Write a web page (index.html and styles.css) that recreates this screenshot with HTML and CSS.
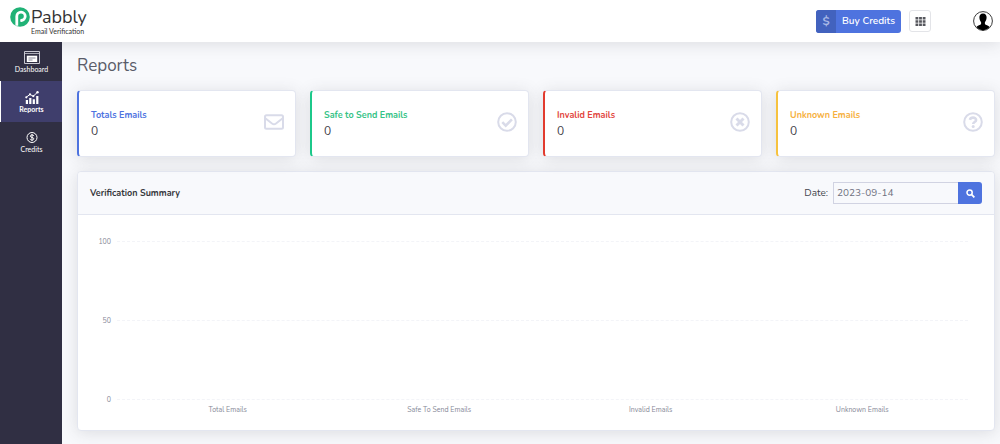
FILE: index.html
```html
<!DOCTYPE html>
<html lang="en">
<head>
<meta charset="utf-8">
<title>Reports - Pabbly Email Verification</title>
<link rel="stylesheet" href="styles.css">
</head>
<body>
<header class="topbar">
  <a class="brand" href="#">
    <svg class="brand-mark" viewBox="0 0 20 20" aria-hidden="true">
      <circle cx="10" cy="10" r="9.8" fill="#20b276"/>
      <path d="M6.800 18.800V9.200a4.200 4.200 0 1 1 4.200 4.300" fill="none" stroke="#fff" stroke-width="2.800"/>
      <path d="M11 12.200v2.500" stroke="#fff" stroke-width="1.500"/>
    </svg>
    <span class="brand-text">
      <span class="brand-name">Pabbly</span>
      <span class="brand-sub">Email Verification</span>
    </span>
  </a>
  <div class="actions">
    <button class="buy" type="button"><span class="buy-icon">$</span><span class="buy-label">Buy Credits</span></button>
    <button class="apps" type="button" aria-label="Apps">
      <svg viewBox="0 0 11 9" width="11" height="9" fill="#55565c"><path d="M.5 0h2.800v2.400H.5zM4.100 0h2.800v2.400H4.100zM7.700 0h2.800v2.400H7.700zM.5 3.300h2.800v2.400H.5zM4.100 3.300h2.800v2.400H4.100zM7.700 3.300h2.800v2.400H7.700zM.5 6.600h2.800V9H.5zM4.100 6.600h2.800V9H4.100zM7.700 6.600h2.800V9H7.700z"/></svg>
    </button>
    <button class="avatar" type="button" aria-label="Account">
      <svg viewBox="0 0 20 20" width="20" height="20">
        <circle cx="10" cy="10" r="9.4" fill="#fff" stroke="#222" stroke-width=".9"/>
        <path d="M10 2.600c2.500 0 3.700 1.700 3.600 4-.1 2-.8 3.700-1.700 4.700v1.600c.5 1 3.600 1.300 4.700 3A9.400 9.400 0 0 1 10 19.400a9.400 9.400 0 0 1-6.600-3.500c1.100-1.700 4.200-2 4.700-3v-1.600C7.200 10.300 6.500 8.600 6.400 6.600c-.1-2.300 1.100-4 3.600-4z" fill="#000"/>
      </svg>
    </button>
  </div>
</header>
<div class="shell">
  <nav class="sidebar">
    <a class="nav-item" href="#">
      <svg viewBox="0 0 16 13" width="16" height="13" fill="none" stroke="#c8c8d2"><path d="M.5.5h15v12H.5z"/><path d="M1 2.500h14" stroke-width=".8"/><path d="M2.800 4.700h10.400v6.300H2.800z" fill="#fff" stroke="none"/><path d="M4.500 7h7M4.500 9h4" stroke="#55546a" stroke-width=".7"/></svg>
      <span>Dashboard</span>
    </a>
    <a class="nav-item active" href="#" aria-current="page">
      <svg viewBox="0 0 14 13" width="14" height="13" fill="#fff"><path d="M.8 9h2.200v4H.8zM4.200 7h2.200v6H4.200zM7.700 8.200h2.200V13H7.700zM11.200 5h2.200v8h-2.200z"/><path d="M1 6.500 5 3.300l3.200 2L12.500 1.200" fill="none" stroke="#fff" stroke-width="1"/><circle cx="1.300" cy="6.300" r="1.100"/><circle cx="5" cy="3.400" r="1.100"/><circle cx="8.300" cy="5.100" r="1.100"/><circle cx="12.500" cy="1.300" r="1.200"/></svg>
      <span>Reports</span>
    </a>
    <a class="nav-item" href="#">
      <svg viewBox="0 0 12 13" width="12" height="13" fill="none" stroke="#fff"><circle cx="6" cy="6.500" r="5"/><path d="M7.800 5c-.2-.8-.9-1.100-1.800-1.100S4.300 4.300 4.300 5.200C4.300 6.900 7.800 6 7.800 7.800c0 .9-.9 1.300-1.800 1.300S4.300 8.700 4.200 7.900M6 3v7"/></svg>
      <span>Credits</span>
    </a>
  </nav>
  <main class="content">
    <h1 class="title">Reports</h1>
    <section class="cards">
      <article class="card blue">
        <div><h2 class="card-label">Totals Emails</h2><p class="card-value">0</p></div>
        <svg class="card-icon" viewBox="0 0 20 20"><rect x="1" y="3.200" width="18" height="13.600" rx="1.500"/><path d="M1.300 6.200 8 11.500q2 1.500 4 0l6.700-5.300"/></svg>
      </article>
      <article class="card green">
        <div><h2 class="card-label">Safe to Send Emails</h2><p class="card-value">0</p></div>
        <svg class="card-icon" viewBox="0 0 20 20"><circle cx="10" cy="10" r="8.800"/><path d="m5.300 10.200 3.400 3.400 6.200-6.200" stroke-width="2.600"/></svg>
      </article>
      <article class="card red">
        <div><h2 class="card-label">Invalid Emails</h2><p class="card-value">0</p></div>
        <svg class="card-icon" viewBox="0 0 20 20"><circle cx="10" cy="10" r="8.800"/><path d="m6.500 6.500 7 7m0-7-7 7" stroke-width="2.900"/></svg>
      </article>
      <article class="card yellow">
        <div><h2 class="card-label">Unknown Emails</h2><p class="card-value">0</p></div>
        <svg class="card-icon" viewBox="0 0 20 20"><circle cx="10" cy="10" r="8.800"/><path d="M6.900 7.800C7.300 6.300 8.500 5.600 10 5.600c1.700 0 3.100.9 3.100 2.300 0 2.200-2.900 2-2.900 4.100" stroke-width="2.600"/><circle cx="10.200" cy="14.600" r="1.500" fill="#d9dbe9" stroke="none"/></svg>
      </article>
    </section>
    <section class="panel">
      <div class="panel-head">
        <h2 class="panel-title">Verification Summary</h2>
        <form class="filter">
          <label for="date">Date:</label>
          <input id="date" type="text" value="2023-09-14">
          <button class="search" type="button" aria-label="Search"><svg viewBox="0 0 10 10" width="9" height="9" fill="none" stroke="#fff"><circle cx="4" cy="4" r="2.900" stroke-width="1.700"/><path d="m6.300 6.300 3 3" stroke-width="2"/></svg></button>
        </form>
      </div>
      <div class="chart">
        <div class="tick"><span class="tick-label">100</span><span class="line"></span></div>
        <div class="tick"><span class="tick-label">50</span><span class="line"></span></div>
        <div class="tick"><span class="tick-label">0</span><span class="line"></span></div>
        <div class="axis"><span>Total Emails</span><span>Safe To Send Emails</span><span>Invalid Emails</span><span>Unknown Emails</span></div>
      </div>
    </section>
  </main>
</div>
</body>
</html>
```
FILE: styles.css
```css
* { box-sizing: border-box; }
body {
  margin: 0;
  min-height: 100vh;
  display: flex;
  flex-direction: column;
  font-family: Nunito, Lato, "Open Sans", sans-serif;
  font-size: 10px;
  color: #45464d;
  background: #f8f9fc;
}
h1, h2, p { margin: 0; }
button { font: inherit; padding: 0; border: 0; cursor: pointer; }
a { text-decoration: none; color: inherit; }
svg { display: block; flex: none; }

.topbar {
  display: flex;
  justify-content: space-between;
  align-items: center;
  height: 42px;
  padding: 0 7px 0 10px;
  background: #fff;
  box-shadow: 0 2px 16px rgba(58, 59, 69, .15);
  position: relative;
  z-index: 1;
}
.brand { display: flex; gap: 1px; color: #333; }
.brand-mark { width: 20px; height: 20px; }
.brand-text { display: flex; flex-direction: column; }
.brand-name { font-size: 18px; line-height: 20px; }
.brand-sub { font-family: Lato, sans-serif; font-size: 7px; line-height: 8px; }
.actions { display: flex; align-items: center; }
.buy {
  display: flex;
  height: 23px;
  line-height: 23px;
  border-radius: 3px;
  overflow: hidden;
  background: #4e73df;
  color: #fff;
}
.buy-icon { width: 20px; background: #4262be; color: #a9b9e6; font-size: 12px; font-weight: 700; }
.buy-label { padding: 0 6px; font-weight: 600; }
.apps {
  display: grid;
  place-items: center;
  width: 22px;
  height: 22px;
  margin: 0 42px 0 8px;
  background: #fff;
  border: 1px solid #e3e4e8;
  border-radius: 3px;
}
.avatar { background: none; border-radius: 50%; }

.shell { flex: 1; display: flex; }
.sidebar { flex: none; width: 62px; background: #302f43; z-index: 2; }
.nav-item {
  display: flex;
  flex-direction: column;
  align-items: center;
  justify-content: center;
  gap: 1px;
  height: 39px;
  padding-left: 1px;
  color: #fff;
  font-family: Lato, sans-serif;
  font-size: 7px;
  line-height: 8px;
}
.nav-item.active { height: 41px; padding-left: 0; border-left: 1px solid #fff; background: #3f3e6c; font-weight: 700; }

.content { flex: 1; min-width: 0; padding: 12px 5px 14px 15px; }
.title { font-size: 17px; line-height: 24px; font-weight: 400; color: #5a5c69; }
.cards { display: grid; grid-template-columns: repeat(4, 1fr); gap: 14px; margin-top: 12px; }
.card {
  display: flex;
  align-items: center;
  justify-content: space-between;
  height: 67px;
  padding: 0 11px 0 12px;
  background: #fff;
  border: 1px solid #e3e6f0;
  border-left: 2px solid;
  border-radius: 4px;
  box-shadow: 0 2px 16px rgba(58, 59, 69, .15);
}
.card-label { font-size: 9px; line-height: 14px; font-weight: 700; }
.card-value { font-size: 12px; line-height: 18px; color: #3f4047; }
.card-icon { width: 20px; height: 20px; margin-bottom: 4px; fill: none; stroke: #d9dbe9; stroke-width: 2; }
.blue { border-left-color: #4e73df; }
.blue .card-label { color: #4e73df; }
.green { border-left-color: #1cc88a; }
.green .card-label { color: #35c386; }
.red { border-left-color: #e23b2e; }
.red .card-label { color: #e2453d; }
.yellow { border-left-color: #f6c23e; }
.yellow .card-label { color: #f6b040; }

.panel {
  margin-top: 14px;
  background: #fff;
  border: 1px solid #e3e6f0;
  border-radius: 4px;
  box-shadow: 0 2px 16px rgba(58, 59, 69, .15);
}
.panel-head {
  display: flex;
  align-items: center;
  justify-content: space-between;
  height: 43px;
  padding: 0 12px;
  background: #f8f9fc;
  border-bottom: 1px solid #e3e6f0;
  border-radius: 4px 4px 0 0;
}
.panel-title { font-size: 9px; font-weight: 700; color: #34353a; }
.filter { display: flex; align-items: center; }
.filter label { margin-right: 5px; }
.filter input {
  width: 125px;
  height: 22px;
  padding: 0 3px;
  font: inherit;
  color: #6e707e;
  background: #f8f9fc;
  border: 1px solid #d1d3e2;
  border-right: 0;
  border-radius: 0;
}
.search {
  display: grid;
  place-items: center;
  width: 24px;
  height: 22px;
  background: #4e73df;
  border-radius: 0 3px 3px 0;
}

.chart { padding: 22px 26px 16px 18px; font-size: 7px; line-height: 9px; color: #858796; }
.tick { display: flex; align-items: center; gap: 6px; height: 9px; margin-bottom: 70px; }
.tick:nth-child(3) { margin-bottom: 1px; }
.tick-label { width: 15px; text-align: right; }
.line { flex: 1; border-top: 1px dashed #f3f4f8; }
.axis { display: grid; grid-template-columns: repeat(4, 1fr); padding-left: 26px; text-align: center; }
```
